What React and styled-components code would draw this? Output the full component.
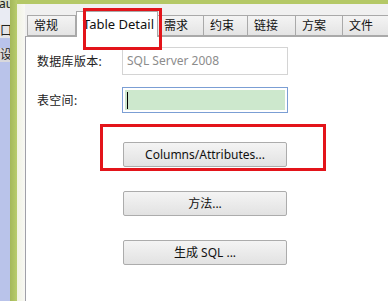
import styled, { createGlobalStyle } from "styled-components";

const GlobalStyle = createGlobalStyle`
    html, body {
        margin: 0;
        padding: 0;
        overflow: hidden;
        background: #ffffff;
    }
    body {
        font-family: "Noto Sans", "Noto Sans CJK SC", sans-serif;
    }
`

const Screen = styled.div `
    position: relative;
    width: 388px;
    height: 301px;
    display: flex;
    overflow: hidden;
`

const LeftStrip = styled.div `
    width: 10px;
    flex-shrink: 0;
    background: #b9c3ea;
    display: flex;
    flex-direction: column;
    overflow: hidden;
`

const StripCell = styled.div `
    height: ${props => props.h}px;
    background: ${props => props.bg};
    font-size: 12px;
    line-height: ${props => props.h}px;
    color: #222;
    white-space: nowrap;
    overflow: hidden;
    margin-top: ${props => props.mt || 0}px;
    text-indent: ${props => props.indent || 0}px;
`

const OliveBar = styled.div `
    width: 7px;
    flex-shrink: 0;
    background: linear-gradient(to right, #a4b85a, #b8cc6c);
`

const MainColumn = styled.div `
    flex: 1;
    display: flex;
    flex-direction: column;
`

const TopGreen = styled.div `
    height: 4px;
    background: #b4c866;
`

const WindowRow = styled.div `
    flex: 1;
    display: flex;
`

const PaleStrip = styled.div `
    width: 8px;
    flex-shrink: 0;
    background: linear-gradient(to right, #f0f2e2, #f8f8f4);
`

const Dialog = styled.div `
    flex: 1;
    display: flex;
    flex-direction: column;
    background: #f0f0f0;
    padding-top: 7px;
`

const TabStrip = styled.div `
    display: flex;
    align-items: flex-end;
    height: 25px;
    padding-left: 2px;
    position: relative;
    z-index: 1;
`

const Tab = styled.div `
    width: ${props => props.w}px;
    height: ${props => (props.active ? 26 : 21)}px;
    box-sizing: border-box;
    padding: 0 6px;
    margin-bottom: ${props => (props.active ? -1 : 0)}px;
    border: 1px solid #a9a9a9;
    border-left-width: ${props => (props.first || props.active ? 1 : 0)}px;
    border-bottom: ${props => (props.active ? "none" : "1px solid #a9a9a9")};
    background: ${props => (props.active ? "#ffffff" : "linear-gradient(#f4f4f4, #e4e4e4)")};
    font-size: ${props => (props.active ? 13 : 12)}px;
    line-height: ${props => (props.active ? 24 : 19)}px;
    color: #111;
    white-space: nowrap;
    flex-shrink: 0;
`

const Panel = styled.div `
    flex: 1;
    background: #ffffff;
    border-top: 1px solid #a9a9a9;
    border-left: 1px solid #a0a0a8;
    padding: 10px 0 0 11px;
    display: flex;
    flex-direction: column;
`

const FieldRow = styled.div `
    display: flex;
    align-items: center;
    margin-bottom: 12px;
`

const Label = styled.div `
    width: 85px;
    font-size: 12px;
    color: #222;
    letter-spacing: 0.3px;
`

const TextBox = styled.div `
    width: 166px;
    height: 28px;
    box-sizing: border-box;
    border: 1px solid #d4d4d4;
    font-size: 12px;
    line-height: 26px;
    color: #8c8c8c;
    padding-left: 4px;
`

const FocusBox = styled.div `
    width: 166px;
    height: 26px;
    box-sizing: border-box;
    border: 1px solid #7b9ed4;
    padding: 2px;
    background: #ffffff;
`

const FocusFill = styled.div `
    height: 100%;
    background: #cde8cd;
    display: flex;
    align-items: center;
    padding-left: 2px;
`

const Caret = styled.div `
    width: 1px;
    height: 17px;
    background: #000;
`

const ButtonStack = styled.div `
    display: flex;
    flex-direction: column;
    gap: 24px;
    margin-top: 17px;
    margin-left: 86px;
`

const Button = styled.div `
    width: 164px;
    height: 25px;
    box-sizing: border-box;
    border: 1px solid #acacac;
    border-radius: 2px;
    background: linear-gradient(#f4f4f4, #e2e2e2);
    font-size: 12px;
    line-height: 23px;
    text-align: center;
    color: #111;
`

const RedMark = styled.div `
    position: absolute;
    left: ${props => props.x}px;
    top: ${props => props.y}px;
    width: ${props => props.w}px;
    height: ${props => props.h}px;
    box-sizing: border-box;
    border: 3px solid #e3141a;
    pointer-events: none;
    z-index: 5;
`

const tabs = [
    { label: "常规", w: 49, first: true },
    { label: "Table Detail", w: 82, active: true },
    { label: "需求", w: 46 },
    { label: "约束", w: 44 },
    { label: "链接", w: 48 },
    { label: "方案", w: 47 },
    { label: "文件", w: 47 },
];

const App = () => {
    return (
        <>
        <GlobalStyle />
        <Screen>
            <LeftStrip>
                <StripCell h={8} bg="#d9e1cc" indent={-1}>au</StripCell>
                <StripCell h={16} bg="#e9ebf3" />
                <StripCell h={14} bg="#e4e4e8">口</StripCell>
                <StripCell h={10} bg="#b9c3ea" />
                <StripCell h={14} bg="#d8d8dc">设计</StripCell>
            </LeftStrip>
            <OliveBar />
            <MainColumn>
                <TopGreen />
                <WindowRow>
                    <PaleStrip />
                    <Dialog>
                        <TabStrip>
                            {tabs.map(t => (
                                <Tab key={t.label} w={t.w} first={t.first} active={t.active}>{t.label}</Tab>
                            ))}
                        </TabStrip>
                        <Panel>
                            <FieldRow>
                                <Label>数据库版本:</Label>
                                <TextBox>SQL Server 2008</TextBox>
                            </FieldRow>
                            <FieldRow>
                                <Label>表空间:</Label>
                                <FocusBox>
                                    <FocusFill><Caret /></FocusFill>
                                </FocusBox>
                            </FieldRow>
                            <ButtonStack>
                                <Button>Columns/Attributes...</Button>
                                <Button>方法...</Button>
                                <Button>生成 SQL ...</Button>
                            </ButtonStack>
                        </Panel>
                    </Dialog>
                </WindowRow>
            </MainColumn>
            <RedMark x={83} y={8} w={79} h={42} />
            <RedMark x={100} y={124} w={226} h={47} />
        </Screen>
        </>
    )
}

export default App;
